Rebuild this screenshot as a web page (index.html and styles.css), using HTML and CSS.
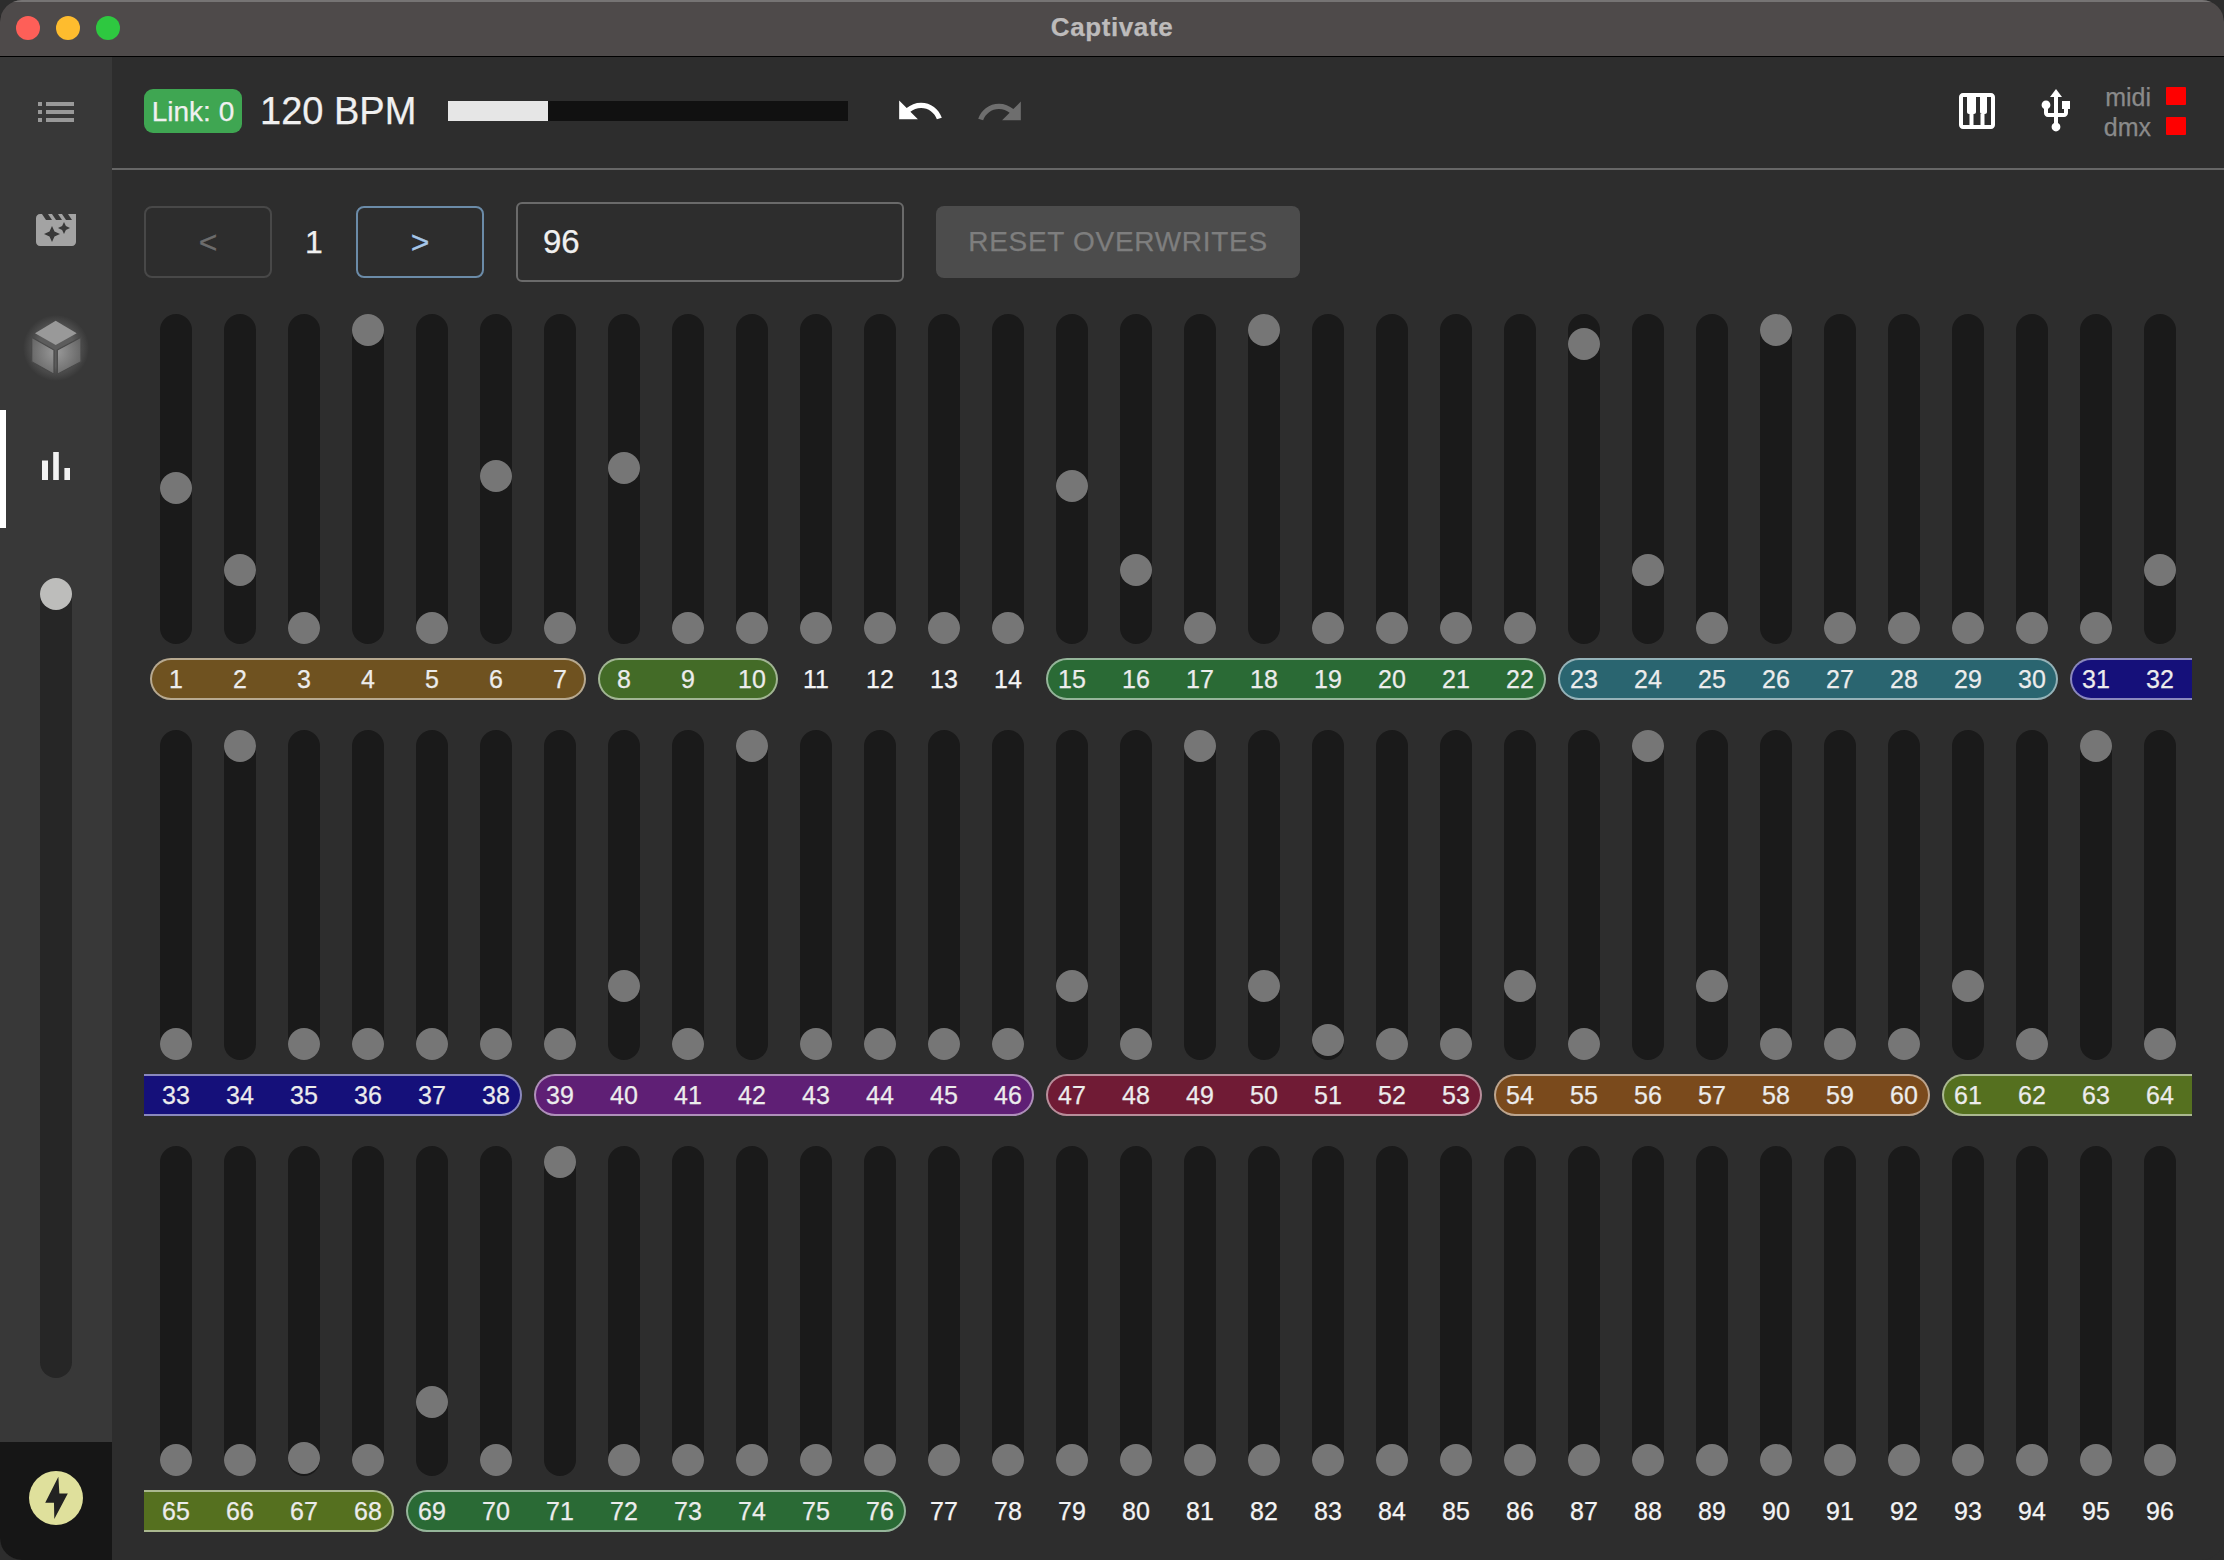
FILE: index.html
```html
<!DOCTYPE html>
<html>
<head>
	<meta charset="utf-8" />
	<title>Captivate</title>
	<link rel="stylesheet" href="styles.css">
</head>
<body>
<div class="window">
	<header class="titlebar">
		<div class="lights"><i class="light lightRed"></i><i class="light lightYellow"></i><i class="light lightGreen"></i></div>
		<div class="title">Captivate</div>
	</header>
	<div class="shell">
		<aside class="sidebar">
			<nav class="nav">
				<div class="navItem"><svg class="icon listIcon" viewBox="0 0 24 24"><path d="M3 13h2v-2H3v2zm0 4h2v-2H3v2zm0-8h2V7H3v2zm4 4h14v-2H7v2zm0 4h14v-2H7v2zM7 7v2h14V7H7z"/></svg></div>
				<div class="navItem"><svg class="icon filmIcon" viewBox="0 0 24 24"><path d="M18 4l2 3h-3l-2-3h-2l2 3h-3l-2-3H8l2 3H7L5 4H4c-1.1 0-1.99.9-1.99 2L2 18c0 1.1.9 2 2 2h16c1.1 0 2-.9 2-2V4h-4zm-6.75 11.25L10 18l-1.25-2.75L6 14l2.75-1.25L10 10l1.25 2.75L14 14l-2.75 1.25zm5.69-3.31L16 14l-.94-2.06L13 11l2.06-.94L16 8l.94 2.06L19 11l-2.06.94z"/></svg></div>
				<div class="navItem">
					<svg class="cube" viewBox="20 312 72 72">
						<defs>
							<radialGradient id="glow"><stop offset="0.55" stop-color="#5c5c5c"/><stop offset="1" stop-color="#5c5c5c" stop-opacity="0"/></radialGradient>
							<radialGradient id="face" gradientUnits="userSpaceOnUse" cx="56" cy="352" r="28"><stop offset="0" stop-color="#9a9a9a"/><stop offset="1" stop-color="#636363"/></radialGradient>
						</defs>
						<circle cx="56" cy="348" r="33" fill="url(#glow)"/>
						<polygon points="55.7,320.7 76.7,333.3 55.7,345 35,333.3" fill="#999"/>
						<polygon points="31.7,337.3 54,350 54,374.3 31.7,361.7" fill="url(#face)" stroke="#484848" stroke-width="1.2"/>
						<polygon points="57.3,350 81,337.3 81,361.7 57.3,374.3" fill="url(#face)" stroke="#484848" stroke-width="1.2"/>
					</svg>
				</div>
				<div class="navItem active"><svg class="icon barsIcon" viewBox="0 0 24 24"><path d="M5 9.2h3V19H5zM10.6 5h2.8v14h-2.8zm5.6 8H19v6h-2.8z"/></svg></div>
			</nav>
			<div class="master"><i class="masterThumb"></i></div>
			<div class="blackout">
				<svg class="bolt" viewBox="88 393 160 160">
					<circle cx="168" cy="473" r="80" fill="#dfe09c"/>
					<polygon points="175,410 136,487 162,487 163,535 203,460 178,460" fill="#222"/>
				</svg>
			</div>
		</aside>
		<main class="main">
			<div class="toolbar">
				<span class="link">Link: 0</span>
				<span class="bpm">120 BPM</span>
				<div class="beat"><div class="beatFill"></div></div>
				<svg class="histIcon undo" viewBox="0 0 24 24"><path d="M12.5 8c-2.65 0-5.05.99-6.9 2.6L2 7v9h9l-3.62-3.62c1.39-1.16 3.16-1.88 5.12-1.88 3.54 0 6.55 2.31 7.6 5.5l2.37-.78C21.08 11.03 17.15 8 12.5 8z"/></svg>
				<svg class="histIcon redo" viewBox="0 0 24 24"><path d="M18.4 10.6C16.55 8.99 14.15 8 11.5 8c-4.65 0-8.58 3.03-9.96 7.22L3.9 16c1.05-3.19 4.05-5.5 7.6-5.5 1.95 0 3.73.72 5.12 1.88L13 16h9V7l-3.6 3.6z"/></svg>
				<div class="status">
					<svg class="statusIcon" viewBox="0 0 24 24"><path d="M19 3H5c-1.1 0-2 .9-2 2v14c0 1.1.9 2 2 2h14c1.1 0 2-.9 2-2V5c0-1.1-.9-2-2-2zm-5.5 10.5h.25V19h-3.5v-5.5h.25c.55 0 1-.45 1-1V5h2v7.5c0 .55.45 1 1 1zM5 5h2v7.5c0 .55.45 1 1 1h.25V19H5V5zm14 14h-3.25v-5.5H16c.55 0 1-.45 1-1V5h2v14z"/></svg>
					<svg class="statusIcon usb" viewBox="0 0 24 24"><path d="M15 7v4h1v2h-3V5h2l-3-4-3 4h2v8H8v-2.07c.7-.37 1.2-1.08 1.2-1.93 0-1.21-.99-2.2-2.2-2.2-1.21 0-2.2.99-2.2 2.2 0 .85.5 1.56 1.2 1.93V13c0 1.11.89 2 2 2h3v3.05c-.71.37-1.2 1.1-1.2 1.95 0 1.22.99 2.2 2.2 2.2 1.21 0 2.2-.98 2.2-2.2 0-.85-.49-1.58-1.2-1.95V15h3c1.11 0 2-.89 2-2v-2h1V7h-4z"/></svg>
					<div class="leds">
						<span class="ledName">midi</span><i class="led"></i>
						<span class="ledName">dmx</span><i class="led"></i>
					</div>
				</div>
			</div>
			<div class="controls">
				<button class="pageBtn prev">&lt;</button>
				<span class="page">1</span>
				<button class="pageBtn next">&gt;</button>
				<div class="count">96</div>
				<button class="reset">RESET OVERWRITES</button>
			</div>

			<div class="faders">
				<div class="fader"><i class="thumb" style="top:158px"></i></div>
				<div class="fader"><i class="thumb" style="top:240px"></i></div>
				<div class="fader"><i class="thumb"></i></div>
				<div class="fader"><i class="thumb" style="top:0px"></i></div>
				<div class="fader"><i class="thumb"></i></div>
				<div class="fader"><i class="thumb" style="top:146px"></i></div>
				<div class="fader"><i class="thumb"></i></div>
				<div class="fader"><i class="thumb" style="top:138px"></i></div>
				<div class="fader"><i class="thumb"></i></div>
				<div class="fader"><i class="thumb"></i></div>
				<div class="fader"><i class="thumb"></i></div>
				<div class="fader"><i class="thumb"></i></div>
				<div class="fader"><i class="thumb"></i></div>
				<div class="fader"><i class="thumb"></i></div>
				<div class="fader"><i class="thumb" style="top:156px"></i></div>
				<div class="fader"><i class="thumb" style="top:240px"></i></div>
				<div class="fader"><i class="thumb"></i></div>
				<div class="fader"><i class="thumb" style="top:0px"></i></div>
				<div class="fader"><i class="thumb"></i></div>
				<div class="fader"><i class="thumb"></i></div>
				<div class="fader"><i class="thumb"></i></div>
				<div class="fader"><i class="thumb"></i></div>
				<div class="fader"><i class="thumb" style="top:14px"></i></div>
				<div class="fader"><i class="thumb" style="top:240px"></i></div>
				<div class="fader"><i class="thumb"></i></div>
				<div class="fader"><i class="thumb" style="top:0px"></i></div>
				<div class="fader"><i class="thumb"></i></div>
				<div class="fader"><i class="thumb"></i></div>
				<div class="fader"><i class="thumb"></i></div>
				<div class="fader"><i class="thumb"></i></div>
				<div class="fader"><i class="thumb"></i></div>
				<div class="fader"><i class="thumb" style="top:240px"></i></div>
			</div>
			<div class="labels">
				<div class="group g7 brown"><span>1</span><span>2</span><span>3</span><span>4</span><span>5</span><span>6</span><span>7</span></div>
				<div class="group g3 leaf"><span>8</span><span>9</span><span>10</span></div>
				<span class="num">11</span><span class="num">12</span><span class="num">13</span><span class="num">14</span>
				<div class="group g8 forest"><span>15</span><span>16</span><span>17</span><span>18</span><span>19</span><span>20</span><span>21</span><span>22</span></div>
				<div class="group g8 teal"><span>23</span><span>24</span><span>25</span><span>26</span><span>27</span><span>28</span><span>29</span><span>30</span></div>
				<div class="group g2 navy openRight"><span>31</span><span>32</span></div>
			</div>

			<div class="faders">
				<div class="fader"><i class="thumb"></i></div>
				<div class="fader"><i class="thumb" style="top:0px"></i></div>
				<div class="fader"><i class="thumb"></i></div>
				<div class="fader"><i class="thumb"></i></div>
				<div class="fader"><i class="thumb"></i></div>
				<div class="fader"><i class="thumb"></i></div>
				<div class="fader"><i class="thumb"></i></div>
				<div class="fader"><i class="thumb" style="top:240px"></i></div>
				<div class="fader"><i class="thumb"></i></div>
				<div class="fader"><i class="thumb" style="top:0px"></i></div>
				<div class="fader"><i class="thumb"></i></div>
				<div class="fader"><i class="thumb"></i></div>
				<div class="fader"><i class="thumb"></i></div>
				<div class="fader"><i class="thumb"></i></div>
				<div class="fader"><i class="thumb" style="top:240px"></i></div>
				<div class="fader"><i class="thumb"></i></div>
				<div class="fader"><i class="thumb" style="top:0px"></i></div>
				<div class="fader"><i class="thumb" style="top:240px"></i></div>
				<div class="fader"><i class="thumb" style="top:294px"></i></div>
				<div class="fader"><i class="thumb"></i></div>
				<div class="fader"><i class="thumb"></i></div>
				<div class="fader"><i class="thumb" style="top:240px"></i></div>
				<div class="fader"><i class="thumb"></i></div>
				<div class="fader"><i class="thumb" style="top:0px"></i></div>
				<div class="fader"><i class="thumb" style="top:240px"></i></div>
				<div class="fader"><i class="thumb"></i></div>
				<div class="fader"><i class="thumb"></i></div>
				<div class="fader"><i class="thumb"></i></div>
				<div class="fader"><i class="thumb" style="top:240px"></i></div>
				<div class="fader"><i class="thumb"></i></div>
				<div class="fader"><i class="thumb" style="top:0px"></i></div>
				<div class="fader"><i class="thumb"></i></div>
			</div>
			<div class="labels">
				<div class="group g6 navy openLeft"><span>33</span><span>34</span><span>35</span><span>36</span><span>37</span><span>38</span></div>
				<div class="group g8 purple"><span>39</span><span>40</span><span>41</span><span>42</span><span>43</span><span>44</span><span>45</span><span>46</span></div>
				<div class="group g7 crimson"><span>47</span><span>48</span><span>49</span><span>50</span><span>51</span><span>52</span><span>53</span></div>
				<div class="group g7 rust"><span>54</span><span>55</span><span>56</span><span>57</span><span>58</span><span>59</span><span>60</span></div>
				<div class="group g4 olive openRight"><span>61</span><span>62</span><span>63</span><span>64</span></div>
			</div>

			<div class="faders">
				<div class="fader"><i class="thumb"></i></div>
				<div class="fader"><i class="thumb"></i></div>
				<div class="fader"><i class="thumb" style="top:296px"></i></div>
				<div class="fader"><i class="thumb"></i></div>
				<div class="fader"><i class="thumb" style="top:240px"></i></div>
				<div class="fader"><i class="thumb"></i></div>
				<div class="fader"><i class="thumb" style="top:0px"></i></div>
				<div class="fader"><i class="thumb"></i></div>
				<div class="fader"><i class="thumb"></i></div>
				<div class="fader"><i class="thumb"></i></div>
				<div class="fader"><i class="thumb"></i></div>
				<div class="fader"><i class="thumb"></i></div>
				<div class="fader"><i class="thumb"></i></div>
				<div class="fader"><i class="thumb"></i></div>
				<div class="fader"><i class="thumb"></i></div>
				<div class="fader"><i class="thumb"></i></div>
				<div class="fader"><i class="thumb"></i></div>
				<div class="fader"><i class="thumb"></i></div>
				<div class="fader"><i class="thumb"></i></div>
				<div class="fader"><i class="thumb"></i></div>
				<div class="fader"><i class="thumb"></i></div>
				<div class="fader"><i class="thumb"></i></div>
				<div class="fader"><i class="thumb"></i></div>
				<div class="fader"><i class="thumb"></i></div>
				<div class="fader"><i class="thumb"></i></div>
				<div class="fader"><i class="thumb"></i></div>
				<div class="fader"><i class="thumb"></i></div>
				<div class="fader"><i class="thumb"></i></div>
				<div class="fader"><i class="thumb"></i></div>
				<div class="fader"><i class="thumb"></i></div>
				<div class="fader"><i class="thumb"></i></div>
				<div class="fader"><i class="thumb"></i></div>
			</div>
			<div class="labels">
				<div class="group g4 olive openLeft"><span>65</span><span>66</span><span>67</span><span>68</span></div>
				<div class="group g8 forest"><span>69</span><span>70</span><span>71</span><span>72</span><span>73</span><span>74</span><span>75</span><span>76</span></div>
				<span class="num">77</span><span class="num">78</span><span class="num">79</span><span class="num">80</span><span class="num">81</span><span class="num">82</span><span class="num">83</span><span class="num">84</span><span class="num">85</span><span class="num">86</span><span class="num">87</span><span class="num">88</span><span class="num">89</span><span class="num">90</span><span class="num">91</span><span class="num">92</span><span class="num">93</span><span class="num">94</span><span class="num">95</span><span class="num">96</span>
			</div>
		</main>
	</div>
</div>
</body>
</html>
```

FILE: styles.css
```css
*{
    box-sizing: border-box;
}
html,body{
    margin: 0;
    height: 100%;
    background: #2d2d2d;
}
body{
    font-family: "Liberation Sans", Arial, sans-serif;
    color: #f0f0f0;
    -webkit-text-stroke: 0.25px;
}
.window{
    width: 2224px;
    height: 1560px;
    display: flex;
    flex-direction: column;
    border-radius: 22px;
    overflow: hidden;
    background: #2d2d2d;
}

/* title bar */
.titlebar{
    position: relative;
    z-index: 2;
    flex: 0 0 56px;
    padding-bottom: 4px;
    display: flex;
    align-items: center;
    justify-content: center;
    background: #4e4a4a;
    border-top: 2px solid #767474;
    box-shadow: 0 1px 0 #000;
}
.lights{
    position: absolute;
    left: 16px;
    top: 14px;
    display: flex;
    gap: 16px;
}
.light{
    width: 24px;
    height: 24px;
    border-radius: 50%;
}
.lightRed{ background: #fe5f58; }
.lightYellow{ background: #febc2e; }
.lightGreen{ background: #2ec840; }
.title{
    font-size: 26px;
    font-weight: bold;
    letter-spacing: 0.6px;
    color: #bdbbbb;
}

.shell{
    flex: 1;
    display: flex;
    min-height: 0;
}

/* sidebar */
.sidebar{
    flex: 0 0 112px;
    display: flex;
    flex-direction: column;
    background: #383838;
}
.navItem{
    position: relative;
    height: 118px;
    padding-bottom: 6px;
    display: flex;
    align-items: center;
    justify-content: center;
}
.navItem.active::before{
    content: "";
    position: absolute;
    left: 0;
    top: 0;
    bottom: 0;
    width: 6px;
    background: #fff;
}
.icon{
    width: 48px;
    height: 48px;
}
.listIcon{ fill: #999; }
.filmIcon{ fill: #a3a3a3; }
.barsIcon{ fill: #f2f2f2; }
.cube{
    width: 72px;
    height: 72px;
}
.master{
    position: relative;
    width: 32px;
    height: 800px;
    margin: 50px auto 0;
    border-radius: 16px;
    background: #262626;
}
.masterThumb{
    position: absolute;
    left: 0;
    top: 0;
    width: 32px;
    height: 32px;
    border-radius: 50%;
    background: #bdbdbb;
}
.blackout{
    margin-top: auto;
    height: 118px;
    padding-bottom: 7px;
    display: flex;
    align-items: center;
    justify-content: center;
    background: #161616;
}
.bolt{
    width: 54px;
    height: 54px;
}

/* main */
.main{
    flex: 1;
    min-width: 0;
}
.toolbar{
    height: 114px;
    padding: 0 38px 2px 32px;
    display: flex;
    align-items: center;
    border-bottom: 2px solid #666;
}
.link{
    width: 98px;
    height: 44px;
    line-height: 46px;
    text-align: center;
    font-size: 28px;
    white-space: nowrap;
    border-radius: 9px;
    background: #3fa652;
}
.bpm{
    margin-left: 18px;
    width: 154px;
    font-size: 38px;
    white-space: nowrap;
}
.beat{
    margin-left: 34px;
    width: 400px;
    height: 20px;
    background: #111;
}
.beatFill{
    width: 25%;
    height: 100%;
    background: #e6e6e6;
}
.histIcon{
    width: 50px;
    height: 50px;
}
.undo{
    margin-left: 47px;
    fill: #fff;
}
.redo{
    margin-left: 30px;
    margin-top: 1px;
    fill: #6e6e6e;
}
.status{
    margin-left: auto;
    display: flex;
    align-items: center;
    gap: 32px;
}
.statusIcon{
    width: 48px;
    height: 48px;
    fill: #fff;
}
.usb{
    margin-left: -1px;
}
.leds{
    margin-left: -8px;
    display: grid;
    grid-template-columns: auto 20px;
    column-gap: 15px;
    row-gap: 12px;
    align-items: center;
    justify-items: end;
}
.ledName{
    height: 18px;
    line-height: 20px;
    font-size: 25px;
    color: #8a8a8a;
}
.led{
    width: 20px;
    height: 18px;
    border-radius: 1px;
    background: #f00;
}

/* page controls */
.controls{
    margin: 32px 0 32px 32px;
    height: 80px;
    display: flex;
    align-items: center;
}
.pageBtn{
    width: 128px;
    height: 72px;
    padding: 0;
    font: 32px "Liberation Sans", Arial, sans-serif;
    background: transparent;
    border-radius: 8px;
}
.prev{
    border: 2px solid #484848;
    color: #6c6c6c;
}
.next{
    border: 2px solid #6b8ba8;
    color: #a5c6e8;
}
.page{
    width: 84px;
    text-align: center;
    font-size: 32px;
}
.count{
    margin-left: 32px;
    width: 388px;
    height: 80px;
    padding-left: 25px;
    line-height: 76px;
    font-size: 33px;
    border: 2px solid #6a6a6a;
    border-radius: 6px;
}
.reset{
    margin-left: 32px;
    width: 364px;
    height: 72px;
    padding: 0;
    font: 28px "Liberation Sans", Arial, sans-serif;
    letter-spacing: 0.7px;
    color: #7e7e7e;
    background: #4c4c4c;
    border: 0;
    border-radius: 8px;
}

/* fader rows */
.faders,.labels{
    margin-left: 32px;
    display: grid;
    grid-template-columns: repeat(32, 64px);
}
.fader{
    position: relative;
    width: 32px;
    height: 330px;
    justify-self: center;
    border-radius: 16px;
    background: #1a1a1a;
}
.thumb{
    position: absolute;
    left: 0;
    top: 298px;
    width: 32px;
    height: 32px;
    border-radius: 50%;
    background: #767676;
}
.labels{
    height: 42px;
    margin-top: 14px;
    margin-bottom: 30px;
    font-size: 25px;
}
.num,.group span{
    flex: 0 0 64px;
    text-align: center;
    line-height: 38px;
}
.num{
    line-height: 42px;
    color: #f4f4f4;
}
.group{
    display: flex;
    margin: 0 6px;
    border: 2px solid rgba(255,255,255,0.5);
    border-radius: 21px;
    color: #ececec;
}
.group span:first-child{
    margin-left: -8px;
}
.openLeft{
    margin-left: 0;
    border-left: 0;
    border-top-left-radius: 0;
    border-bottom-left-radius: 0;
}
.openLeft span:first-child{
    margin-left: 0;
}
.openRight{
    margin-right: 0;
    border-right: 0;
    border-top-right-radius: 0;
    border-bottom-right-radius: 0;
}
.g2{ grid-column: span 2; }
.g3{ grid-column: span 3; }
.g4{ grid-column: span 4; }
.g6{ grid-column: span 6; }
.g7{ grid-column: span 7; }
.g8{ grid-column: span 8; }
.brown{ background: #6f5220; }
.leaf{ background: #436b27; }
.forest{ background: #2a6a35; }
.teal{ background: #2a6570; }
.navy{ background: #15107a; }
.purple{ background: #5f1f75; }
.crimson{ background: #701b35; }
.rust{ background: #7a4a1c; }
.olive{ background: #55701f; }
```
